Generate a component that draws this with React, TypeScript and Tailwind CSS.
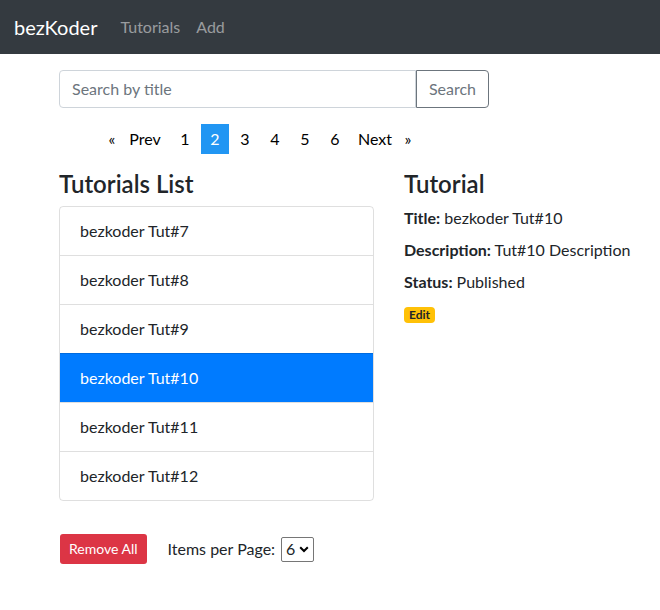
import React from "react";

export default function App() {
  const items = [7, 8, 9, 10, 11, 12];
  const pages = [1, 2, 3, 4, 5, 6];
  return (
    <div className="min-h-[610px] overflow-hidden bg-white text-[16px] leading-[24px] text-[#212529] [font-family:'Segoe_UI','Lato','Liberation_Sans',sans-serif]">
      <nav className="flex h-[54px] items-center bg-[#343a40] px-[14px]">
        <span className="mr-[15px] text-[20px] leading-[30px] text-white">bezKoder</span>
        <span className="px-[8px] text-[rgba(255,255,255,0.5)]">Tutorials</span>
        <span className="px-[8px] text-[rgba(255,255,255,0.5)]">Add</span>
      </nav>
      <div className="pl-[59px] pt-[16px]">
        <div className="flex h-[38px] w-[430px]">
          <div className="flex flex-1 items-center rounded-l-[4px] border border-[#ced4da] px-[12px] text-[#6c757d]">
            Search by title
          </div>
          <div className="flex w-[73px] items-center justify-center rounded-r-[4px] border border-[#6c757d] text-[#6c757d]">
            Search
          </div>
        </div>
        <div className="mt-[16px] flex h-[30px] items-center pl-[45px] text-[#000]">
          <span className="flex w-[16px] justify-center">«</span>
          <span className="flex w-[50px] justify-center">Prev</span>
          {pages.map((p) => (
            <span
              key={p}
              className={
                p === 2
                  ? "flex h-[30px] w-[30px] items-center justify-center border-x border-white bg-[#2196f3] text-white"
                  : "flex h-[30px] w-[30px] items-center justify-center"
              }
            >
              {p}
            </span>
          ))}
          <span className="flex w-[50px] justify-center">Next</span>
          <span className="flex w-[16px] justify-center">»</span>
        </div>
        <div className="mt-[16px] flex gap-[30px]">
          <div className="w-[315px] shrink-0">
            <h4 className="mb-[8px] text-[24px] font-semibold leading-[28px]">Tutorials List</h4>
            <ul className="overflow-hidden rounded-[4px] border border-[rgba(0,0,0,0.125)]">
              {items.map((n, i) => (
                <li
                  key={n}
                  className={
                    (i > 0 ? "border-t border-[rgba(0,0,0,0.125)] " : "") +
                    (n === 10
                      ? "-mx-px bg-[#007bff] px-[21px] py-[12px] text-white"
                      : "px-[20px] py-[12px]")
                  }
                >
                  bezkoder Tut#{n}
                </li>
              ))}
            </ul>
            <div className="mt-[33px] flex items-center">
              <span className="ml-px flex h-[30px] items-center rounded-[3px] bg-[#dc3545] px-[9px] text-[14px] text-white">
                Remove All
              </span>
              <span className="ml-[21px]">Items per Page:</span>
              <span className="ml-[6px] flex h-[25px] w-[33px] items-center justify-between rounded-[2px] border border-[#767676] pl-[4px] pr-[4px] text-[16px]">
                6
                <svg width="10" height="7" viewBox="0 0 10 7">
                  <path d="M1.2 1.2 L5 5 L8.8 1.2" fill="none" stroke="#000" strokeWidth="2" />
                </svg>
              </span>
            </div>
          </div>
          <div className="w-[256px] shrink-0">
            <h4 className="mb-[8px] text-[24px] font-semibold leading-[28px]">Tutorial</h4>
            <div className="h-[32px]">
              <strong className="font-bold">Title:</strong> bezkoder Tut#10
            </div>
            <div className="h-[32px] whitespace-nowrap">
              <strong className="font-bold">Description:</strong> Tut#10 Description
            </div>
            <div className="h-[32px]">
              <strong className="font-bold">Status:</strong> Published
            </div>
            <div className="mt-[5px] flex">
              <span className="rounded-[4px] bg-[#ffc107] px-[5px] py-[2px] text-[12px] font-bold leading-[12px] text-[#212529]">
                Edit
              </span>
            </div>
          </div>
        </div>
      </div>
    </div>
  );
}
